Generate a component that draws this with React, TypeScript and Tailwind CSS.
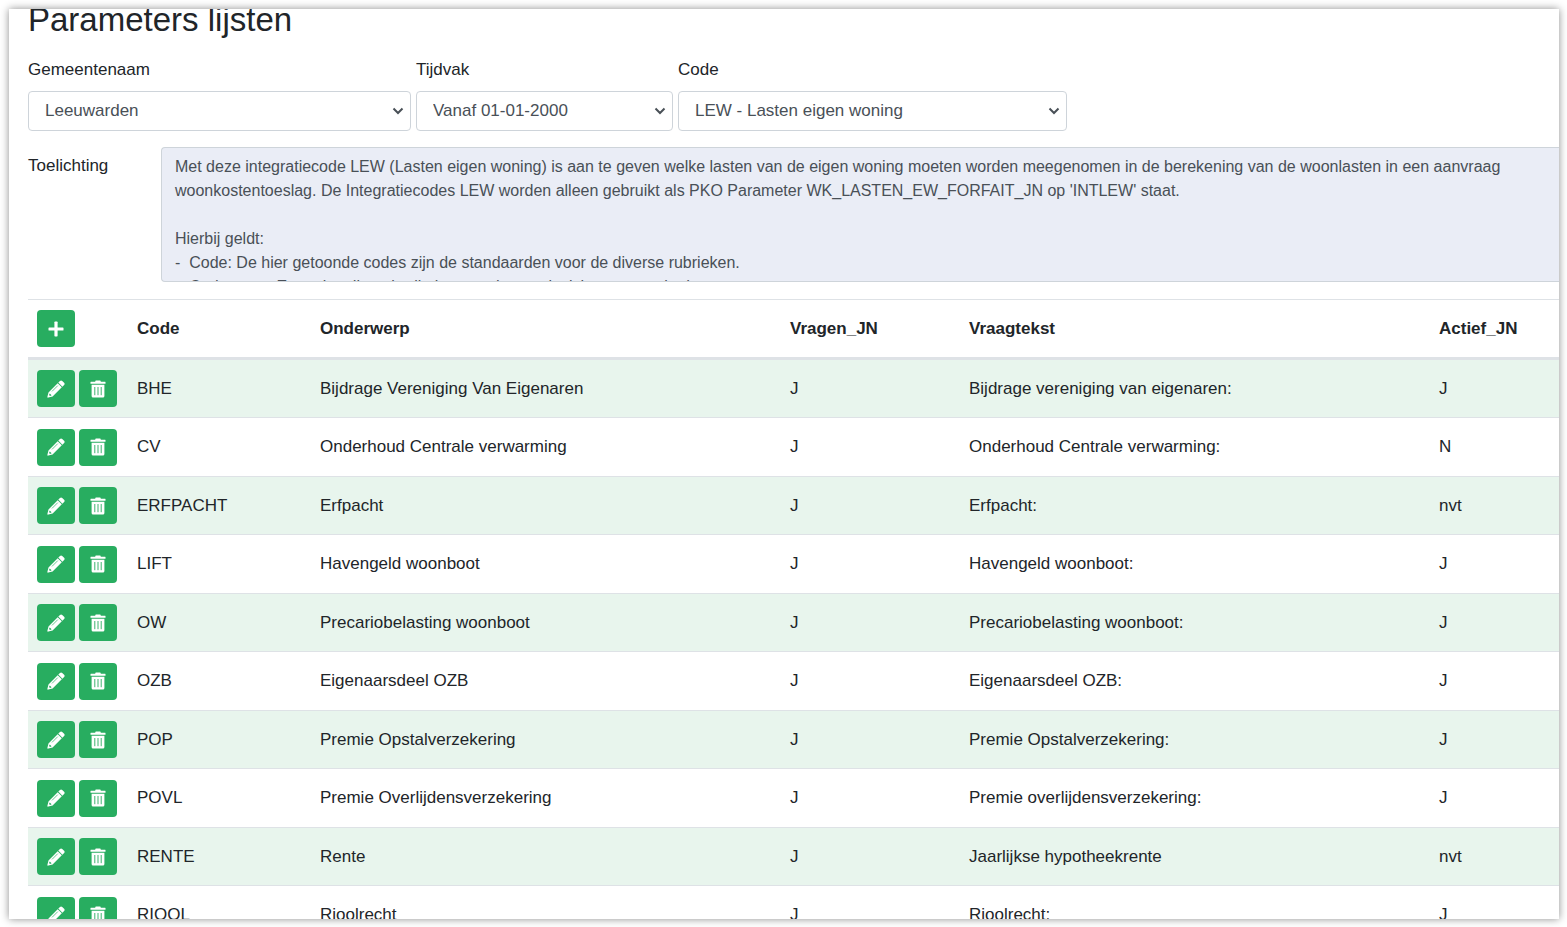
import type { ReactNode } from "react";
import clsx from "clsx";

const selects = [
  { id: "gemeente", label: "Gemeentenaam", value: "Leeuwarden", width: "w-[383px]" },
  { id: "tijdvak", label: "Tijdvak", value: "Vanaf 01-01-2000", width: "w-[257px]" },
  { id: "code", label: "Code", value: "LEW - Lasten eigen woning", width: "w-[389px]" },
];

const toelichting = `Met deze integratiecode LEW (Lasten eigen woning) is aan te geven welke lasten van de eigen woning moeten worden meegenomen in de berekening van de woonlasten in een aanvraag
woonkostentoeslag. De Integratiecodes LEW worden alleen gebruikt als PKO Parameter WK_LASTEN_EW_FORFAIT_JN op 'INTLEW' staat.

Hierbij geldt:
-  Code: De hier getoonde codes zijn de standaarden voor de diverse rubrieken.
-  Codenaam: Een tekst die gebruikt kan worden om inzicht te geven in de post.`;

const rows = [
  ["BHE", "Bijdrage Vereniging Van Eigenaren", "J", "Bijdrage vereniging van eigenaren:", "J"],
  ["CV", "Onderhoud Centrale verwarming", "J", "Onderhoud Centrale verwarming:", "N"],
  ["ERFPACHT", "Erfpacht", "J", "Erfpacht:", "nvt"],
  ["LIFT", "Havengeld woonboot", "J", "Havengeld woonboot:", "J"],
  ["OW", "Precariobelasting woonboot", "J", "Precariobelasting woonboot:", "J"],
  ["OZB", "Eigenaarsdeel OZB", "J", "Eigenaarsdeel OZB:", "J"],
  ["POP", "Premie Opstalverzekering", "J", "Premie Opstalverzekering:", "J"],
  ["POVL", "Premie Overlijdensverzekering", "J", "Premie overlijdensverzekering:", "J"],
  ["RENTE", "Rente", "J", "Jaarlijkse hypotheekrente", "nvt"],
  ["RIOOL", "Rioolrecht", "J", "Rioolrecht:", "J"],
];

function PlusIcon() {
  return (
    <svg viewBox="0 0 18 18" className="h-[18px] w-[18px]" fill="currentColor">
      <rect x="1.5" y="7.4" width="15" height="3.2" rx="0.7" />
      <rect x="7.4" y="1.5" width="3.2" height="15" rx="0.7" />
    </svg>
  );
}

function PencilIcon() {
  return (
    <svg viewBox="0 0 18 18" className="h-[18px] w-[18px]">
      <path
        fill="currentColor"
        d="M13 .9a1.600 1.600 0 0 1 2.200 0l1.900 1.900a1.600 1.600 0 0 1 0 2.200L15.400 6.700 11.300 2.600zM10.700 3.200l4.100 4.100L5.600 16.500 1.300 17.600a.7.700 0 0 1-.9-.9l1.100-4.300z"
      />
      <path stroke="#28ad60" strokeWidth="0.7" fill="none" d="M10.800 5.600 5 11.400" />
      <path fill="#28ad60" d="m2.700 13.400 1.900 1.900-1.600.6-.9-.9z" />
    </svg>
  );
}

function TrashIcon() {
  return (
    <svg viewBox="0 0 18 18" className="h-[18px] w-[18px]">
      <path
        fill="currentColor"
        d="M6.700.5h4.600l.6 1.200h4.200a.4.400 0 0 1 .4.400v1.700h-15V2.100a.4.400 0 0 1 .4-.4h4.200zM2.600 4.700h12.800v11.300a1.500 1.500 0 0 1-1.500 1.500H4.100a1.500 1.500 0 0 1-1.500-1.500z"
      />
      <path stroke="#28ad60" strokeWidth="0.9" d="M5.800 7v8.200M9 7v8.200M12.200 7v8.200" />
    </svg>
  );
}

function IconButton({ label, children }: { label: string; children: ReactNode }) {
  return (
    <button
      aria-label={label}
      className="flex h-[37px] w-[38px] items-center justify-center rounded bg-[#28ad60] text-white hover:bg-[#22924f]"
    >
      {children}
    </button>
  );
}

export default function App() {
  return (
    <div className="h-screen bg-white pt-[9px] pr-2 pb-2 pl-[9px] font-['Liberation_Sans',Arial,sans-serif] text-[17px] text-[#212529]">
      <main className="h-full overflow-hidden bg-white pl-[19px] shadow-[0_0_8px_rgba(0,0,0,0.45)]">
        <h1 className="-mt-[9px] text-[33px] leading-10">Parameters lijsten</h1>

        <div className="mt-[18px] flex gap-[5px]">
          {selects.map((s) => (
            <div key={s.id} className={s.width}>
              <label htmlFor={s.id} className="block leading-6">
                {s.label}
              </label>
              <div className="relative mt-[9px]">
                <select
                  id={s.id}
                  className="h-10 w-full appearance-none rounded border border-[#ced4da] bg-white px-4 text-[#495057]"
                >
                  <option>{s.value}</option>
                </select>
                <svg
                  viewBox="0 0 12 8"
                  className="pointer-events-none absolute top-4 right-[7px] h-2 w-3"
                  fill="none"
                  stroke="#495057"
                  strokeWidth="2"
                >
                  <path d="M1.500 1.500 6 6l4.500-4.500" />
                </svg>
              </div>
            </div>
          ))}
        </div>

        <div className="mt-4 flex">
          <label htmlFor="toelichting" className="w-[133px] shrink-0 pt-[7px] leading-6">
            Toelichting
          </label>
          <textarea
            id="toelichting"
            readOnly
            value={toelichting}
            className="block h-[135px] flex-1 resize-none overflow-hidden rounded-l border border-r-0 border-[#ced4da] bg-[#eaedf6] pt-[7px] pl-[13px] text-base leading-6 whitespace-pre text-[#495057]"
          />
        </div>

        <table className="mt-[17px] w-full table-fixed border-separate border-spacing-0 text-left">
          <colgroup>
            <col className="w-[100px]" />
            <col className="w-[183px]" />
            <col />
            <col className="w-[179px]" />
            <col />
            <col className="w-[129px]" />
          </colgroup>
          <thead>
            <tr className="h-[61px] *:border-t *:border-b-3 *:border-[#dee2e6] *:px-[9px]">
              <th>
                <IconButton label="Toevoegen">
                  <PlusIcon />
                </IconButton>
              </th>
              <th>Code</th>
              <th>Onderwerp</th>
              <th>Vragen_JN</th>
              <th>Vraagtekst</th>
              <th>Actief_JN</th>
            </tr>
          </thead>
          <tbody>
            {rows.map((row, i) => (
              <tr
                key={row[0]}
                className={clsx(
                  "*:border-b *:border-[#dee2e6] *:px-[9px]",
                  i % 2 === 0 ? "h-[58px] bg-[#e8f5ed]" : "h-[59px]",
                )}
              >
                <td>
                  <div className="flex gap-1">
                    <IconButton label={`${row[0]} bewerken`}>
                      <PencilIcon />
                    </IconButton>
                    <IconButton label={`${row[0]} verwijderen`}>
                      <TrashIcon />
                    </IconButton>
                  </div>
                </td>
                {row.map((cell, j) => (
                  <td key={j}>{cell}</td>
                ))}
              </tr>
            ))}
          </tbody>
        </table>
      </main>
    </div>
  );
}
